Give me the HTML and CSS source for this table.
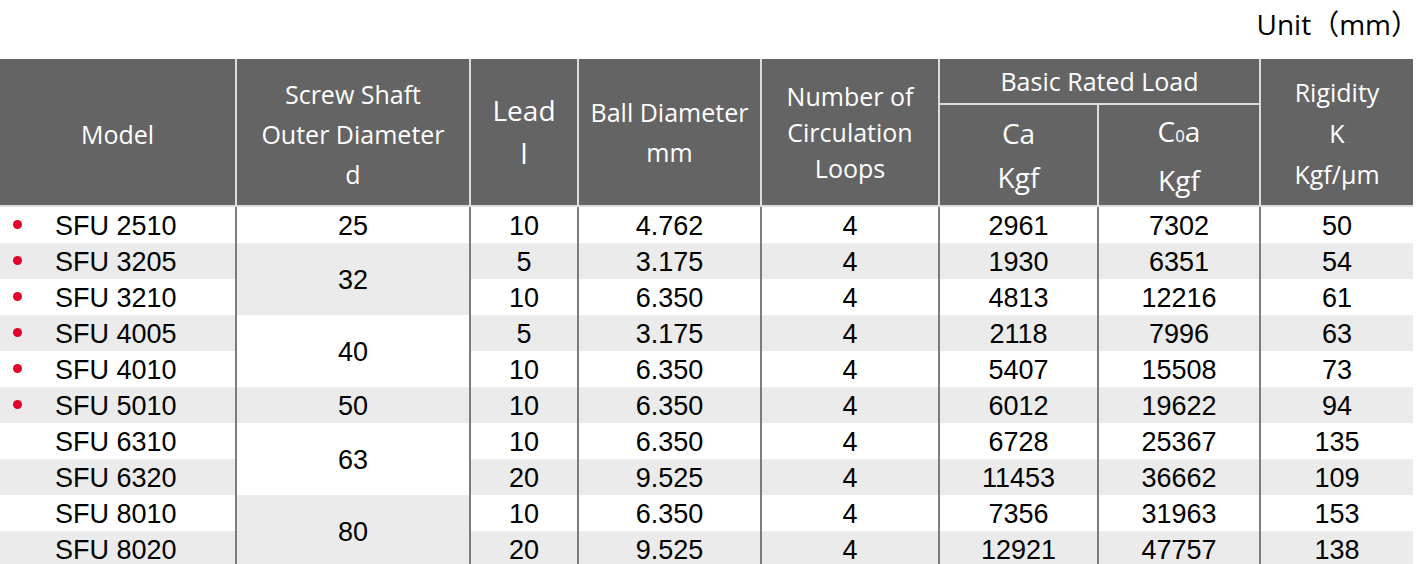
FILE: index.html
```html
<!DOCTYPE html>
<html lang="en">
<head>
<meta charset="utf-8">
<title>SFU Ball Screw Specifications</title>
<link rel="stylesheet" href="styles.css">
</head>
<body>
<div class="page">
  <div class="unit">Unit（mm）</div>
  <table class="spec">
    <colgroup>
      <col class="c-model">
      <col class="c-shaft">
      <col class="c-lead">
      <col class="c-ball">
      <col class="c-loops">
      <col class="c-ca">
      <col class="c-c0a">
      <col class="c-rig">
    </colgroup>
    <thead>
      <tr class="h1">
        <th rowspan="2" class="first shift">Model</th>
        <th rowspan="2" class="lh40 shift">Screw Shaft<br>Outer Diameter<br>d</th>
        <th rowspan="2" class="lg lh43">Lead<br>l</th>
        <th rowspan="2" class="lh40">Ball Diameter<br>mm</th>
        <th rowspan="2" class="lh36">Number of<br>Circulation<br>Loops</th>
        <th colspan="2" class="group">Basic Rated Load</th>
        <th rowspan="2" class="lh41 shift-sm">Rigidity<br>K<br>Kgf/μm</th>
      </tr>
      <tr class="h2">
        <th class="lg lh44">Ca<br>Kgf</th>
        <th class="lg lh44">C<span class="sub">0</span>a<br>Kgf</th>
      </tr>
    </thead>
    <tbody>
      <tr class="w">
        <td class="model"><span class="dot"></span>SFU 2510</td>
        <td class="bg-w">25</td>
        <td>10</td><td>4.762</td><td>4</td><td>2961</td><td>7302</td><td>50</td>
      </tr>
      <tr class="g">
        <td class="model"><span class="dot"></span>SFU 3205</td>
        <td rowspan="2" class="bg-g">32</td>
        <td>5</td><td>3.175</td><td>4</td><td>1930</td><td>6351</td><td>54</td>
      </tr>
      <tr class="w">
        <td class="model"><span class="dot"></span>SFU 3210</td>
        <td>10</td><td>6.350</td><td>4</td><td>4813</td><td>12216</td><td>61</td>
      </tr>
      <tr class="g">
        <td class="model"><span class="dot"></span>SFU 4005</td>
        <td rowspan="2" class="bg-w">40</td>
        <td>5</td><td>3.175</td><td>4</td><td>2118</td><td>7996</td><td>63</td>
      </tr>
      <tr class="w">
        <td class="model"><span class="dot"></span>SFU 4010</td>
        <td>10</td><td>6.350</td><td>4</td><td>5407</td><td>15508</td><td>73</td>
      </tr>
      <tr class="g">
        <td class="model"><span class="dot"></span>SFU 5010</td>
        <td class="bg-g">50</td>
        <td>10</td><td>6.350</td><td>4</td><td>6012</td><td>19622</td><td>94</td>
      </tr>
      <tr class="w">
        <td class="model"><span class="dot none"></span>SFU 6310</td>
        <td rowspan="2" class="bg-w">63</td>
        <td>10</td><td>6.350</td><td>4</td><td>6728</td><td>25367</td><td>135</td>
      </tr>
      <tr class="g">
        <td class="model"><span class="dot none"></span>SFU 6320</td>
        <td>20</td><td>9.525</td><td>4</td><td>11453</td><td>36662</td><td>109</td>
      </tr>
      <tr class="w">
        <td class="model"><span class="dot none"></span>SFU 8010</td>
        <td rowspan="2" class="bg-g">80</td>
        <td>10</td><td>6.350</td><td>4</td><td>7356</td><td>31963</td><td>153</td>
      </tr>
      <tr class="g">
        <td class="model"><span class="dot none"></span>SFU 8020</td>
        <td>20</td><td>9.525</td><td>4</td><td>12921</td><td>47757</td><td>138</td>
      </tr>
    </tbody>
  </table>
</div>
</body>
</html>
```
FILE: styles.css
```css
html, body {
  margin: 0;
  padding: 0;
  background: #ffffff;
}

.page {
  width: 1419px;
}

.unit {
  height: 59px;
  line-height: 48px;
  font-family: "Open Sans", "Noto Sans CJK SC", sans-serif;
  font-size: 28px;
  color: #000;
  text-align: right;
  padding-right: 0;
}

.spec {
  width: 1413px;
  table-layout: fixed;
  border-collapse: separate;
  border-spacing: 0;
}

.c-model { width: 235px; }
.c-shaft { width: 234px; }
.c-lead  { width: 108px; }
.c-ball  { width: 183px; }
.c-loops { width: 178px; }
.c-ca    { width: 159px; }
.c-c0a   { width: 162px; }
.c-rig   { width: 154px; }

.spec th,
.spec td {
  padding: 0;
  box-sizing: border-box;
}

.spec th {
  background: #646464;
  color: #ffffff;
  font-family: "Open Sans", "Noto Sans", sans-serif;
  font-weight: normal;
  font-size: 25px;
  text-align: center;
  vertical-align: middle;
  border-left: 2px solid #dcdcdc;
  border-bottom: 2px solid #dcdcdc;
}

.spec th.first {
  border-left: none;
}

.spec th.shift {
  padding-top: 4px;
}

.spec th.shift-sm {
  padding-top: 2px;
}

.h1 { height: 46px; }
.h2 { height: 102px; }

.spec th.lg { font-size: 28px; }
.lh36 { line-height: 36px; }
.lh40 { line-height: 40px; }
.lh41 { line-height: 41px; }
.lh43 { line-height: 43px; }
.lh44 { line-height: 44px; }

.spec th.group {
  line-height: 44px;
}

.sub {
  font-size: 0.6em;
}

.spec tbody tr {
  height: 36px;
}

.spec td {
  font-family: "Liberation Sans", Arial, sans-serif;
  font-size: 27px;
  line-height: 34px;
  padding-top: 2px;
  color: #000;
  text-align: center;
  vertical-align: middle;
  border-left: 2px solid #7c7c7c;
  white-space: nowrap;
}

.spec td.model {
  border-left: none;
  text-align: left;
  padding-left: 13px;
}

.dot {
  display: inline-block;
  width: 9px;
  height: 9px;
  border-radius: 50%;
  background: #e2002a;
  margin-right: 33px;
  vertical-align: 6px;
}

.dot.none {
  visibility: hidden;
}

tr.w td { background: #ffffff; }
tr.g td { background: #ebebeb; }
.spec td.bg-w { background: #ffffff; }
.spec td.bg-g { background: #ebebeb; }
```
